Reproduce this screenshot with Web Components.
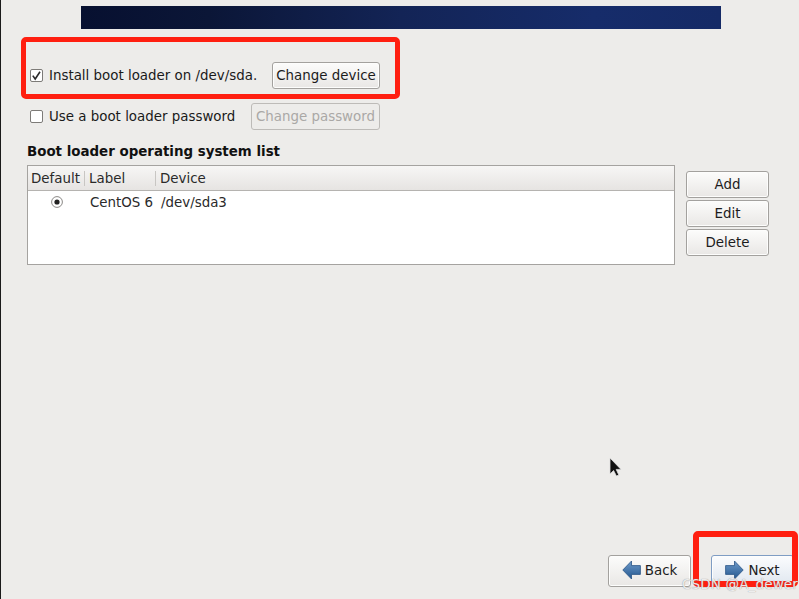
<!DOCTYPE html>
<html><head><meta charset="utf-8">
<style>
html,body{margin:0;padding:0;width:799px;height:599px;overflow:hidden;background:#edecea}
body{font:13.4px "DejaVu Sans",sans-serif;color:#1a1a1a;position:relative}
</style></head><body>
<boot-page></boot-page>
<script>
const btnCss=`:host{display:inline-flex;box-sizing:border-box;align-items:center;justify-content:center;gap:4px;height:27px;border:1px solid #a3a19e;border-radius:3px;background:linear-gradient(#fcfcfb,#e9e7e5);color:#1c1c1c;font:13.4px "DejaVu Sans",sans-serif;box-shadow:inset 0 0 0 1px #fdfdfc}
:host([disabled]){color:#aaa8a6;background:#edecea;border-color:#bdbbb8;box-shadow:none}
:host([focused]){border-color:#7f9dc4;background:linear-gradient(#fbfcfe,#dfe6ef)}`;
class GtkButton extends HTMLElement{constructor(){super();this.attachShadow({mode:'open'}).innerHTML=`<style>${btnCss}</style><slot></slot>`}}
customElements.define('gtk-button',GtkButton);
class GtkCheck extends HTMLElement{constructor(){super();const c=this.hasAttribute('checked');this.attachShadow({mode:'open'}).innerHTML=`<style>:host{display:inline-flex;align-items:center;gap:6px;white-space:nowrap}svg{display:block;flex:none}</style><svg width="13" height="13" viewBox="0 0 13 13"><rect x=".5" y=".5" width="12" height="12" rx="1.5" fill="#fff" stroke="#7d7b78"/>${c?'<path d="M2.8 6.6L5.2 10L10 2.8" fill="none" stroke="#2b2b2b" stroke-width="1.6"/>':''}</svg><slot></slot>`}}
customElements.define('gtk-check',GtkCheck);
class OsTable extends HTMLElement{constructor(){super();this.attachShadow({mode:'open'}).innerHTML=`<style>
:host{display:block;box-sizing:border-box;width:648px;height:100px;border:1px solid #a5a3a0;background:#fff}
.h{display:grid;grid-template-columns:57px 71px 1fr;height:25px;box-sizing:border-box;border-bottom:1px solid #b5b3b0;background:linear-gradient(#f7f6f5,#e6e4e2);align-items:center;color:#2a2a2a}
.h span{padding-left:3px;line-height:15px;border-right:1px solid #c8c6c3}
.h span+span{padding-left:4px}.h span:last-child{border:0;padding-left:4px}
.r{display:grid;grid-template-columns:57px 75px 1fr;height:22px;align-items:center;color:#2a2a2a}
.r svg{justify-self:center;margin-left:1px}.r span:last-child{padding-left:1px}
.r span.l{padding-left:5px}
</style><div class="h"><span>Default</span><span>Label</span><span>Device</span></div>
<div class="r"><svg width="12" height="12" viewBox="0 0 12 12"><circle cx="6" cy="6" r="5.4" fill="#fff" stroke="#8a8886"/><circle cx="6" cy="6" r="2.6" fill="#222"/></svg><span class="l">CentOS 6</span><span>/dev/sda3</span></div>`}}
customElements.define('os-table',OsTable);
class NavArrow extends HTMLElement{constructor(){super();const l=this.getAttribute('dir')==='left';this.attachShadow({mode:'open'}).innerHTML=`<style>:host{display:inline-block;width:19px;height:20px}svg{display:block}</style><svg width="19" height="20" viewBox="0 0 19 20"><defs><linearGradient id="g" x1="0" y1="0" x2="0" y2="1"><stop offset="0" stop-color="#6f9bcb"/><stop offset="1" stop-color="#23578f"/></linearGradient></defs><path transform="${l?'':'translate(19,0) scale(-1,1)'}" d="M.8 10L9.5 1V5.6H18.4V14.4H9.5V19Z" fill="url(#g)" stroke="#2a5485" stroke-width=".8"/></svg>`}}
customElements.define('nav-arrow',NavArrow);
class BootPage extends HTMLElement{constructor(){super();this.attachShadow({mode:'open'}).innerHTML=`<style>
:host{display:flex;flex-direction:column;width:799px;height:599px;box-sizing:border-box;border-left:1px solid #1a1a1a;overflow:hidden;position:relative}
.banner{height:23px;width:640px;margin:6px 0 0 80px;flex:none;background:linear-gradient(90deg,#071030 0,#0b1637 20%,#132456 50%,#162c6a 80%,#152a66 100%)}
.opts{display:grid;grid-template-columns:auto;margin:33px 0 0 29px;width:350px;row-gap:14px}
.row{display:flex;align-items:center;justify-content:space-between;height:27px}
h2{margin:13px 0 0 26px;height:17px;font:bold 13.4px/17px "DejaVu Sans",sans-serif;color:#111}
.list{display:flex;margin:5px 0 0 26px;gap:11px}
.side{display:flex;flex-direction:column;gap:2px;padding-top:6px;width:83px}
.nav{margin-top:auto;display:flex;gap:20px;padding:0 0 12px 607px;width:max-content}
.nav gtk-button{width:83px;height:32px;padding:0 0 2px;gap:4px}
.red{position:absolute;box-sizing:border-box;border:5px solid #ff1f10;border-radius:5px}
.wm{position:absolute;left:681px;top:576px;font:13.5px "DejaVu Sans",sans-serif;color:rgba(255,255,255,.85);letter-spacing:.15px;text-shadow:0 0 1px #777;white-space:nowrap}
.cur{position:absolute;left:608px;top:457px}
</style>
<div class="banner"></div>
<div class="opts">
<div class="row"><gtk-check checked>Install boot loader on /dev/sda.</gtk-check><gtk-button style="width:108px">Change device</gtk-button></div>
<div class="row"><gtk-check>Use a boot loader password</gtk-check><gtk-button disabled style="width:129px">Change password</gtk-button></div>
</div>
<h2>Boot loader operating system list</h2>
<div class="list"><os-table></os-table><div class="side"><gtk-button>Add</gtk-button><gtk-button>Edit</gtk-button><gtk-button>Delete</gtk-button></div></div>
<div class="nav"><gtk-button><nav-arrow dir="left"></nav-arrow>Back</gtk-button><gtk-button focused><nav-arrow></nav-arrow>Next</gtk-button></div>
<div class="red" style="left:20px;top:37px;width:379px;height:62px"></div>
<div class="red" style="left:692px;top:531px;width:105px;height:56px;border-width:6px"></div>
<svg class="cur" width="14" height="20" viewBox="0 0 14 20"><path d="M1 1V17L4.6 13.5L7.4 19L9.8 18L7.2 12.4H12Z" fill="#111" stroke="#ddd" stroke-width=".8"/></svg>
<div class="wm">CSDN @A_dewer</div>
`}}
customElements.define('boot-page',BootPage);
</script>
</body></html>
